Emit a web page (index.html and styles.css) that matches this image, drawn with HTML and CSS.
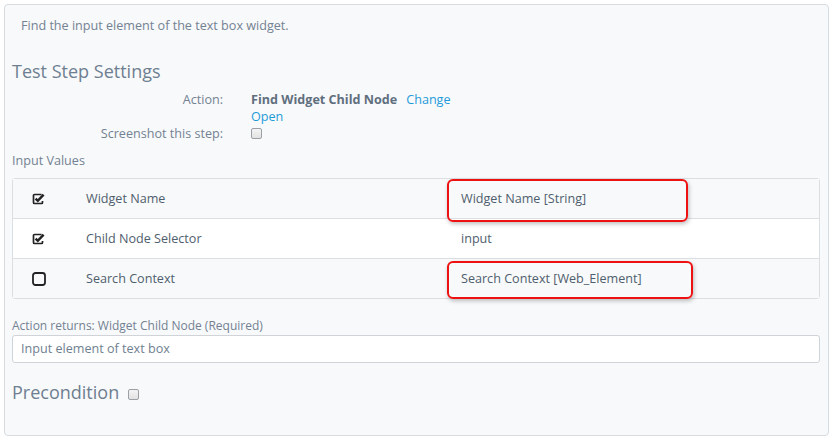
FILE: index.html
```html
<!DOCTYPE html>
<html>
<head>
<meta charset="utf-8">
<link rel="stylesheet" href="styles.css">
</head>
<body>
<div class="panel">
  <div class="desc">Find the input element of the text box widget.</div>
  <h2 class="heading">Test Step Settings</h2>
  <div class="settings">
    <div class="label">Action:</div>
    <div class="value"><span class="action-name">Find Widget Child Node</span><a class="link change">Change</a><br><a class="link">Open</a></div>
    <div class="label">Screenshot this step:</div>
    <div class="value"><span class="mini-check"></span></div>
  </div>
  <div class="section-label">Input Values</div>
  <div class="table">
    <div class="row odd">
      <div class="cell-icon"><svg class="icon" viewBox="0 0 14 12"><path d="M9.5 1.5H2.5a1 1 0 0 0-1 1v7a1 1 0 0 0 1 1h7a1 1 0 0 0 1-1V8" fill="none" stroke="#222" stroke-width="1.7"/><path d="M3.6 5.6l2.2 2.2 5.8-6.2" fill="none" stroke="#222" stroke-width="2.5"/></svg></div>
      <div class="cell-name">Widget Name</div>
      <div class="cell-value">Widget Name [String]<span class="mark mark-1"></span></div>
    </div>
    <div class="row">
      <div class="cell-icon"><svg class="icon" viewBox="0 0 14 12"><path d="M9.5 1.5H2.5a1 1 0 0 0-1 1v7a1 1 0 0 0 1 1h7a1 1 0 0 0 1-1V8" fill="none" stroke="#222" stroke-width="1.7"/><path d="M3.6 5.6l2.2 2.2 5.8-6.2" fill="none" stroke="#222" stroke-width="2.5"/></svg></div>
      <div class="cell-name">Child Node Selector</div>
      <div class="cell-value">input</div>
    </div>
    <div class="row odd">
      <div class="cell-icon"><svg class="icon icon-empty" viewBox="0 0 14 14"><rect x="1" y="1" width="12" height="12" rx="2.5" fill="none" stroke="#222" stroke-width="1.8"/></svg></div>
      <div class="cell-name">Search Context</div>
      <div class="cell-value">Search Context [Web_Element]<span class="mark mark-2"></span></div>
    </div>
  </div>
  <div class="returns-label">Action returns: Widget Child Node (Required)</div>
  <div class="text-input">Input element of text box</div>
  <h2 class="precondition">Precondition <span class="mini-check"></span></h2>
</div>
</body>
</html>
```
FILE: styles.css
```css
* { box-sizing: border-box; }
body {
  margin: 0;
  background: #ffffff;
  font-family: "Open Sans", "Liberation Sans", sans-serif;
  font-size: 12.6px;
  color: #6f7f90;
}
.panel {
  margin: 4px 0 0 4px;
  width: 825px;
  background: #f8f9fb;
  border: 1px solid #d8dcdf;
  border-radius: 4px;
  padding: 0 8px 32px 7px;
}
.desc {
  margin-top: 12px;
  line-height: 18px;
  padding-left: 9px;
  color: #738292;
}
.heading {
  margin: 24px 0 0;
  font-size: 18px;
  line-height: 24px;
  font-weight: 400;
  color: #6e7f91;
}
.settings {
  margin-top: 8px;
  display: grid;
  grid-template-columns: 211px 1fr;
  column-gap: 28px;
  line-height: 17px;
}
.label { text-align: right; color: #738292; }
.action-name { font-weight: 700; color: #606f7e; }
.link { color: #1f9bd9; text-decoration: none; }
.change { margin-left: 9px; }
.mini-check {
  display: inline-block;
  width: 11px;
  height: 11px;
  border: 1px solid #9aa0a6;
  border-radius: 2px;
  background: linear-gradient(#f4f4f4, #e2e2e2);
  vertical-align: middle;
  position: relative;
  top: -1px;
}
.section-label {
  margin-top: 10px;
  line-height: 18px;
  color: #738292;
}
.table {
  margin-top: 8px;
  border: 1px solid #dcdfe2;
  border-radius: 3px;
  background: #ffffff;
}
.row {
  display: grid;
  grid-template-columns: 73px 361px 1fr;
  height: 40px;
  align-items: center;
  border-top: 1px solid #dcdfe2;
  color: #4f5e6d;
  line-height: 17px;
}
.row:first-child { border-top: none; height: 39px; }
.row.odd { background: #f8f9fb; }
.cell-name, .cell-value { padding-bottom: 1px; }
.cell-icon { padding-left: 19px; display: flex; align-items: center; }
.icon { width: 14px; height: 12px; display: block; }
.icon-empty { width: 14px; height: 14px; }
.cell-value { position: relative; padding-left: 14px; height: 100%; display: flex; align-items: center; }
.mark {
  position: absolute;
  left: 0;
  border: 2px solid #ee1111;
  border-radius: 6px;
  box-shadow: 1px 2px 4px rgba(0, 0, 0, 0.25);
}
.mark-1 { top: 0; width: 241px; height: 43px; }
.mark-2 { top: 2px; width: 246px; height: 38px; }
.returns-label {
  margin-top: 19px;
  font-size: 12px;
  line-height: 16px;
  color: #738292;
}
.text-input {
  margin-top: 1px;
  height: 28px;
  border: 1px solid #d0d4d8;
  border-radius: 3px;
  background: #ffffff;
  padding-left: 8px;
  line-height: 25px;
  color: #6f7f90;
}
.precondition {
  margin: 18px 0 0;
  font-size: 18px;
  line-height: 22px;
  font-weight: 400;
  color: #6e7f91;
}
.precondition .mini-check { margin-left: 4px; top: 0; }
```
